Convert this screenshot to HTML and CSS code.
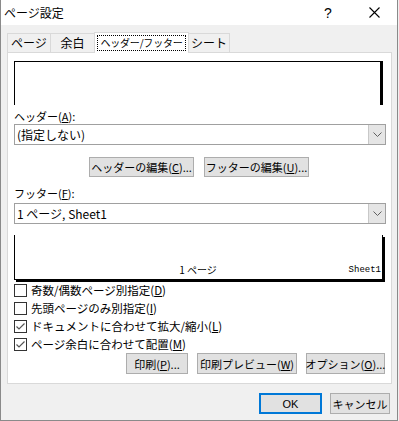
FILE: index.html
```html
<!DOCTYPE html>
<html lang="ja">
<head>
  <meta charset="UTF-8">
  <title>ページ設定</title>
  <link rel="stylesheet" href="styles.css">
</head>
<body>
  <div class="window">
    <!-- Title bar -->
    <div class="titlebar">
      <span class="title">ページ設定</span>
      <span class="caption-btn">?</span>
      <span class="caption-btn close">
        <svg width="11" height="11" viewBox="0 0 11 11"><path d="M0.5 0.5 L10.5 10.5 M10.5 0.5 L0.5 10.5" stroke="#000" stroke-width="1.1" fill="none"/></svg>
      </span>
    </div>

    <div class="content">
      <!-- Tabs -->
      <div class="tabs">
        <div class="tab t1">ページ</div>
        <div class="tab t2">余白</div>
        <div class="tab active"><span class="focus">ヘッダー/フッター</span></div>
        <div class="tab t4">シート</div>
      </div>

      <div class="panel">
        <div class="preview header-preview"></div>

        <div class="label label-header">ヘッダー(<u>A</u>):</div>
        <div class="select">
          <span class="select-text">(指定しない)</span>
          <span class="drop">
            <svg width="9" height="5" viewBox="0 0 9 5"><path d="M0.5 0.5 L4.5 4.5 L8.5 0.5" stroke="#606060" fill="none"/></svg>
          </span>
        </div>

        <div class="edit-row">
          <div class="btn edit-btn">ヘッダーの編集(<u>C</u>)...</div>
          <div class="btn edit-btn">フッターの編集(<u>U</u>)...</div>
        </div>

        <div class="label label-footer">フッター(<u>F</u>):</div>
        <div class="select">
          <span class="select-text">1 ページ, Sheet1</span>
          <span class="drop">
            <svg width="9" height="5" viewBox="0 0 9 5"><path d="M0.5 0.5 L4.5 4.5 L8.5 0.5" stroke="#606060" fill="none"/></svg>
          </span>
        </div>

        <div class="preview footer-preview">
          <span class="fp-left"></span>
          <span class="fp-center">1 ページ</span>
          <span class="fp-right">Sheet1</span>
        </div>

        <!-- Options -->
        <div class="checks">
          <div class="check"><span class="box"></span>奇数/偶数ページ別指定(<u>D</u>)</div>
          <div class="check"><span class="box"></span>先頭ページのみ別指定(<u>I</u>)</div>
          <div class="check"><span class="box checked"><svg width="11" height="11" viewBox="0 0 11 11"><path d="M1.5 5.5 L4 8 L9.5 2.5" stroke="#555" stroke-width="1.2" fill="none"/></svg></span>ドキュメントに合わせて拡大/縮小(<u>L</u>)</div>
          <div class="check"><span class="box checked"><svg width="11" height="11" viewBox="0 0 11 11"><path d="M1.5 5.5 L4 8 L9.5 2.5" stroke="#555" stroke-width="1.2" fill="none"/></svg></span>ページ余白に合わせて配置(<u>M</u>)</div>
        </div>

        <div class="print-row">
          <div class="btn print-btn">印刷(<u>P</u>)...</div>
          <div class="btn preview-btn">印刷プレビュー(<u>W</u>)</div>
          <div class="btn option-btn">オプション(<u>O</u>)...</div>
        </div>
      </div>

      <div class="footer-row">
        <div class="btn ok-btn">OK</div>
        <div class="btn cancel-btn">キャンセル</div>
      </div>
    </div>
  </div>
</body>
</html>
```

FILE: styles.css
```css
* {
  box-sizing: border-box;
}
body {
  margin: 0;
  background-color: #f0f0f0;
  font-family: "Noto Sans CJK JP", "Noto Sans", sans-serif;
  font-size: 11px;
  color: #000;
}
u {
  text-underline-offset: 1px;
}
.window {
  width: 398px;
  height: 421px;
  border: 1px solid #8a8a8a;
  border-top: none;
  background-color: #f0f0f0;
}
.titlebar {
  height: 25px;
  background-color: #fff;
  display: flex;
  align-items: center;
}
.title {
  font-size: 12px;
  padding-left: 3px;
  flex: 1;
}
.caption-btn {
  width: 46px;
  height: 25px;
  display: flex;
  align-items: center;
  justify-content: center;
  font-family: "Liberation Sans", sans-serif;
  font-size: 14px;
}
.content {
  padding: 7px 6px 0 6px;
}
.tabs {
  display: flex;
  align-items: flex-end;
  height: 20px;
}
.tab {
  height: 19px;
  border: 1px solid #d9d9d9;
  border-bottom: none;
  background-color: #f0f0f0;
  display: flex;
  align-items: center;
  justify-content: center;
  font-size: 12px;
  line-height: 1;
  white-space: nowrap;
}
.t1 {
  width: 44px;
}
.t2 {
  width: 45px;
  margin-left: -1px;
}
.t4 {
  width: 42px;
  margin-left: -1px;
}
.tab.active {
  width: 95px;
  height: 21px;
  margin-left: -1px;
  margin-bottom: -1px;
  background-color: #fff;
  position: relative;
  z-index: 1;
  padding-bottom: 1px;
}
.focus {
  outline: 1px dotted #000;
  padding: 2px 2px 2px 2px;
  font-size: 10px;
  letter-spacing: -0.2px;
  line-height: 10px;
}
.panel {
  width: 385px;
  height: 332px;
  border: 1px solid #d9d9d9;
  background-color: #fff;
  padding: 8px 5px 0 6px;
}
.preview {
  width: 369px;
  border: 1px solid #000;
}
.header-preview {
  height: 44px;
  border-bottom: none;
  border-right-width: 3px;
}
.label {
  height: 15px;
  line-height: 15px;
}
.label-header {
  margin-top: 4px;
  margin-bottom: 0;
}
.label-footer {
  margin-top: 9px;
  margin-bottom: 2px;
}
.select {
  height: 21px;
  border: 1px solid #a0a0a0;
  display: flex;
  align-items: stretch;
  font-size: 12px;
}
.select-text {
  flex: 1;
  line-height: 19px;
  padding-left: 2px;
}
.drop {
  width: 17px;
  background-color: #e5e5e5;
  border-left: 1px solid #c8c8c8;
  display: flex;
  align-items: center;
  justify-content: center;
}
.edit-row {
  display: flex;
  justify-content: center;
  gap: 10px;
  margin-top: 12px;
  padding-right: 2px;
}
.btn {
  height: 20px;
  background-color: #e1e1e1;
  border: 1px solid #adadad;
  display: flex;
  align-items: center;
  justify-content: center;
  font-size: 11px;
  white-space: nowrap;
}
.edit-btn {
  width: 105px;
}
.footer-preview {
  height: 45px;
  margin-top: 11px;
  border-top: none;
  box-shadow: 2px 2px 0 #000;
  display: flex;
  align-items: flex-end;
  padding: 0 1px 3px 0;
}
.fp-left,
.fp-right {
  flex: 1;
}
.fp-center {
  font-size: 10px;
  line-height: 12px;
}
.fp-right {
  text-align: right;
  font-family: "Liberation Mono", monospace;
  font-size: 9px;
  line-height: 12px;
}
.checks {
  margin-top: 1px;
}
.check {
  height: 18px;
  display: flex;
  align-items: center;
  font-size: 11.5px;
}
.box {
  width: 13px;
  height: 13px;
  border: 1px solid #333;
  margin-right: 4px;
  display: flex;
  align-items: center;
  justify-content: center;
}
.print-row {
  display: flex;
  justify-content: flex-end;
  gap: 9px;
  margin-top: 0;
  padding-right: 1px;
}
.print-row .btn {
  height: 21px;
}
.print-btn {
  width: 62px;
}
.preview-btn {
  width: 100px;
}
.option-btn {
  width: 79px;
}
.footer-row {
  display: flex;
  justify-content: flex-end;
  gap: 8px;
  margin-top: 9px;
  padding-right: 1px;
}
.footer-row .btn {
  height: 21px;
  font-size: 11px;
}
.ok-btn {
  width: 63px;
  border: 2px solid #0078d7;
  font-family: "Liberation Sans", sans-serif;
  font-size: 12px;
}
.cancel-btn {
  width: 60px;
}
```
